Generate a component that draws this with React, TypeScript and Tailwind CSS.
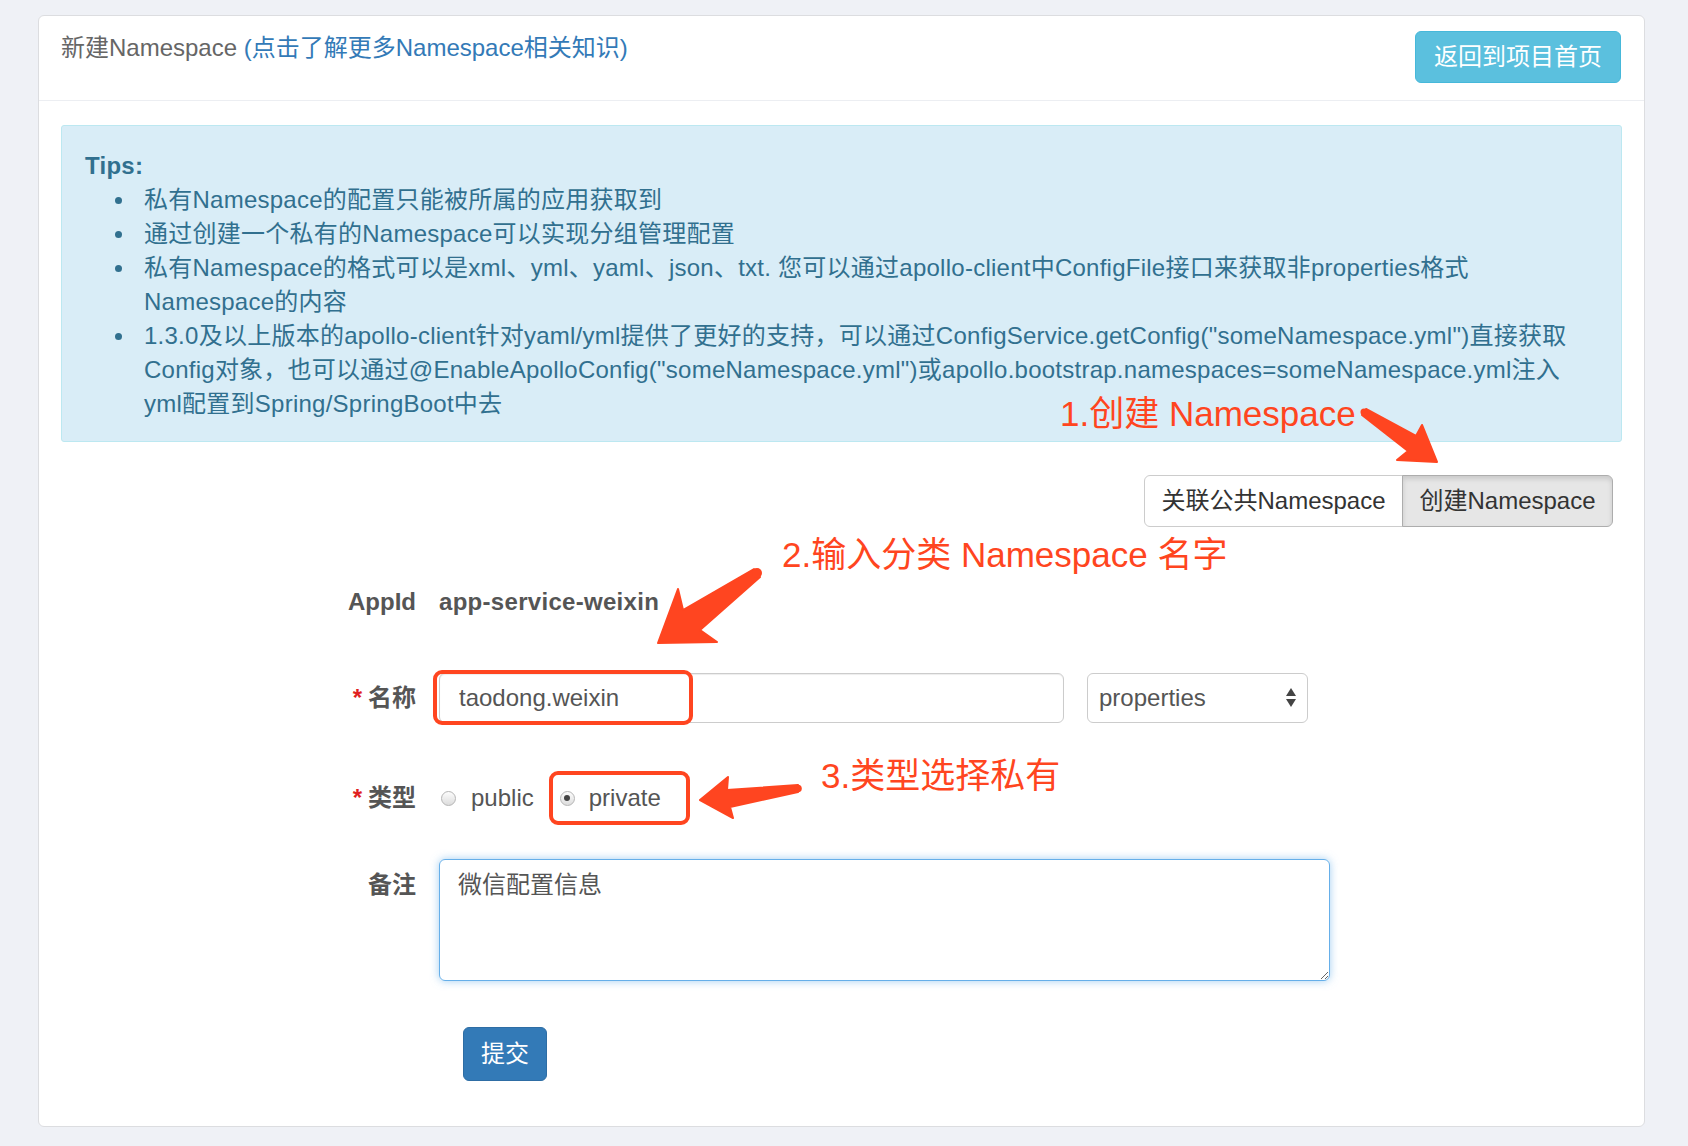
import React from "react";

const font = "font-['Liberation_Sans','Noto_Sans_CJK_SC',sans-serif]";

function Radio({ checked }: { checked?: boolean }) {
  return (
    <span className="flex h-[15px] w-[15px] items-center justify-center rounded-full border border-[#b5b5b5] bg-gradient-to-b from-[#fdfdfd] to-[#dcdcdc]">
      {checked && <span className="h-[6px] w-[6px] rounded-full bg-[#444]" />}
    </span>
  );
}

function Label({ children, required }: { children: React.ReactNode; required?: boolean }) {
  return (
    <div className="w-[355px] shrink-0 text-right font-bold text-[#555]">
      {required && <span className="mr-[6px] text-[#e02020]">*</span>}
      {children}
    </div>
  );
}

export default function App() {
  return (
    <div className={`relative min-h-[1146px] w-[1688px] bg-[#eff1f6] pt-[15px] text-[24px] leading-[34px] ${font}`}>
      <div className="ml-[38px] w-[1607px] rounded-[6px] border border-[#dcdde0] bg-white">
        {/* header */}
        <div className="flex h-[85px] items-start justify-between border-b border-[#eceef2] pl-[22px] pr-[23px] pt-[15px]">
          <div className="text-[#666]">
            新建Namespace <span className="text-[#337ab7]">(点击了解更多Namespace相关知识)</span>
          </div>
          <button className="h-[52px] rounded-[6px] border border-[#46b8da] bg-[#5bc0de] px-[18px] text-white">
            返回到项目首页
          </button>
        </div>

        <div className="px-[22px] pb-[45px] pt-[24px]">
          {/* tips */}
          <div className="rounded-[3px] border border-[#bce8f1] bg-[#d9edf7] px-[23px] pb-[20px] pt-[23px] tracking-[0.25px] text-[#31708f]">
            <div className="font-semibold">Tips:</div>
            <ul>
              {[
                <>私有Namespace的配置只能被所属的应用获取到</>,
                <>通过创建一个私有的Namespace可以实现分组管理配置</>,
                <>
                  私有Namespace的格式可以是xml、yml、yaml、json、txt. 您可以通过apollo-client中ConfigFile接口来获取非properties格式
                  <br />
                  Namespace的内容
                </>,
                <>
                  1.3.0及以上版本的apollo-client针对yaml/yml提供了更好的支持，可以通过ConfigService.getConfig("someNamespace.yml")直接获取
                  <br />
                  Config对象，也可以通过@EnableApolloConfig("someNamespace.yml")或apollo.bootstrap.namespaces=someNamespace.yml注入
                  <br />
                  yml配置到Spring/SpringBoot中去
                </>,
              ].map((t, i) => (
                <li key={i} className="flex">
                  <span className="flex h-[34px] w-[59px] shrink-0 items-center pl-[30px]">
                    <span className="h-[7px] w-[7px] rounded-full bg-[#31708f]" />
                  </span>
                  <span className="whitespace-nowrap">{t}</span>
                </li>
              ))}
            </ul>
          </div>

          {/* button group */}
          <div className="mt-[33px] flex justify-end pr-[9px]">
            <div className="flex h-[52px] text-[#333]">
              <button className="w-[259px] rounded-l-[6px] border border-[#ccc] bg-white">关联公共Namespace</button>
              <button className="-ml-px w-[211px] rounded-r-[6px] border border-[#adadad] bg-[#e6e6e6] shadow-[inset_0_3px_5px_rgba(0,0,0,0.125)]">
                创建Namespace
              </button>
            </div>
          </div>

          {/* form */}
          <div className="mt-[58px] flex gap-[23px]">
            <Label>AppId</Label>
            <div className="font-bold tracking-[0.3px] text-[#555]">app-service-weixin</div>
          </div>

          <div className="mt-[54px] flex items-center gap-[23px]">
            <Label required>名称</Label>
            <div className="flex h-[50px] w-[625px] items-center rounded-[6px] border border-[#ccc] pl-[19px] text-[#555] shadow-[inset_0_1px_1px_rgba(0,0,0,0.075)]">
              taodong.weixin
            </div>
            <div className="flex h-[50px] w-[221px] items-center justify-between rounded-[6px] border border-[#ccc] pl-[11px] pr-[10px] text-[#555]">
              properties
              <svg width="12" height="22" viewBox="0 0 12 22">
                <path d="M6 1 L11 9 L1 9 Z" fill="#444" />
                <path d="M1 12 L11 12 L6 20 Z" fill="#444" />
              </svg>
            </div>
          </div>

          <div className="mt-[58px] flex items-center gap-[23px]">
            <Label required>类型</Label>
            <div className="flex items-center text-[#555]">
              <span className="ml-[2px]"><Radio /></span>
              <span className="ml-[15px]">public</span>
              <span className="ml-[26px]"><Radio checked /></span>
              <span className="ml-[14px]">private</span>
            </div>
          </div>

          <div className="mt-[44px] flex gap-[23px]">
            <div className="pt-[9px]">
              <Label>备注</Label>
            </div>
            <textarea
              readOnly
              defaultValue="微信配置信息"
              className="h-[122px] w-[891px] rounded-[6px] border border-[#66afe9] px-[18px] py-[8px] text-[#555] shadow-[0_0_8px_rgba(102,175,233,0.6)] outline-none"
            />
          </div>

          <div className="mt-[46px] flex gap-[23px]">
            <div className="w-[355px] shrink-0" />
            <button className="ml-[24px] h-[54px] w-[84px] rounded-[6px] border border-[#2e6da4] bg-[#337ab7] text-white">
              提交
            </button>
          </div>
        </div>
      </div>

      {/* annotations */}
      <svg className="pointer-events-none absolute left-0 top-0" width="1688" height="1146">
        <rect x="435" y="672" width="256" height="51" rx="7" fill="none" stroke="#ff4520" strokeWidth="4" />
        <rect x="551" y="773" width="137" height="50" rx="7" fill="none" stroke="#ff4520" strokeWidth="4" />
        <g fill="#ff4520" stroke="#ff4520" strokeWidth="2" strokeLinejoin="round">
          <polygon points="1366,409 1416,436 1422,425 1437,462 1397,460 1408,451 1362,415" />
          <polygon points="754,569 683,610 678,589 658,643 717,642 700,630 760,577" />
          <polygon points="798,785 727,790 728,777 700,800 733,818 730,807 798,792" />
        </g>
        <circle cx="1364" cy="412" r="3.5" fill="#ff4520" />
        <circle cx="757" cy="573" r="5" fill="#ff4520" />
        <circle cx="798" cy="788.5" r="3.8" fill="#ff4520" />
      </svg>
      <div className="pointer-events-none absolute left-[1060px] top-[393px] whitespace-nowrap text-[35px] leading-[42px] text-[#ff4520]">
        1.创建 Namespace
      </div>
      <div className="pointer-events-none absolute left-[782px] top-[534px] whitespace-nowrap text-[35px] leading-[42px] text-[#ff4520]">
        2.输入分类 Namespace 名字
      </div>
      <div className="pointer-events-none absolute left-[821px] top-[755px] whitespace-nowrap text-[35px] leading-[42px] text-[#ff4520]">
        3.类型选择私有
      </div>
    </div>
  );
}
